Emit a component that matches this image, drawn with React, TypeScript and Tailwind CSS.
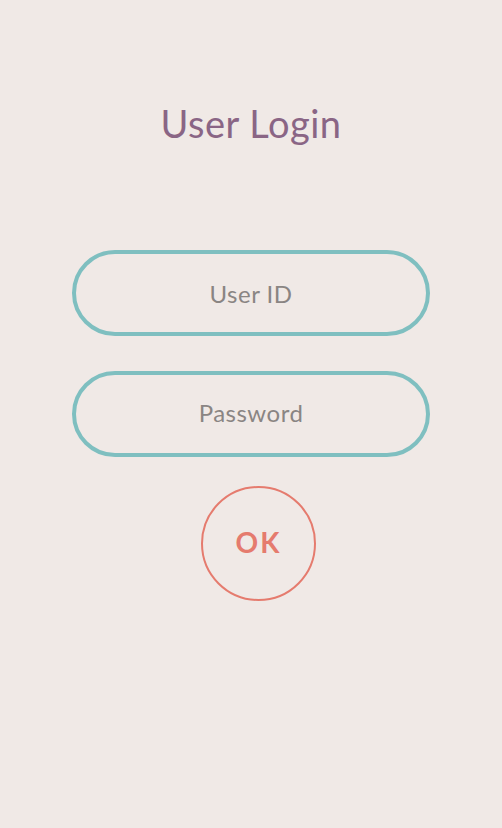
import React from 'react';

export default function App() {
  return (
    <div
      className="min-h-screen w-full bg-[#f0e9e6] flex flex-col items-center"
      style={{ fontFamily: 'Lato, "Open Sans", sans-serif' }}
    >
      <h1 className="mt-[101px] text-[38px] leading-[44px] text-[#8a6585] tracking-[0.5px]">User Login</h1>

      <form className="mt-[105px] flex flex-col items-center" onSubmit={(e) => e.preventDefault()}>
        <input
          type="text"
          placeholder="User ID"
          className="w-[358px] h-[86px] rounded-full border-4 border-[#7fbfc0] bg-transparent text-center text-[24px] tracking-[0.5px] text-[#8a8583] placeholder:text-[#8a8583] outline-none"
        />
        <input
          type="password"
          placeholder="Password"
          className="mt-[35px] w-[358px] h-[86px] rounded-full border-4 border-[#7fbfc0] bg-transparent text-center text-[24px] tracking-[0.5px] text-[#8a8583] placeholder:text-[#8a8583] outline-none pb-[4px]"
        />
        <div className="mt-[29px] w-full flex justify-center pl-[15px]">
          <button
            type="submit"
            className="w-[115px] h-[115px] rounded-full border-2 border-[#e57b6e] text-[#e57b6e] text-[28px] font-bold tracking-[2px] pb-[4px]"
          >
            OK
          </button>
        </div>
      </form>
    </div>
  );
}
